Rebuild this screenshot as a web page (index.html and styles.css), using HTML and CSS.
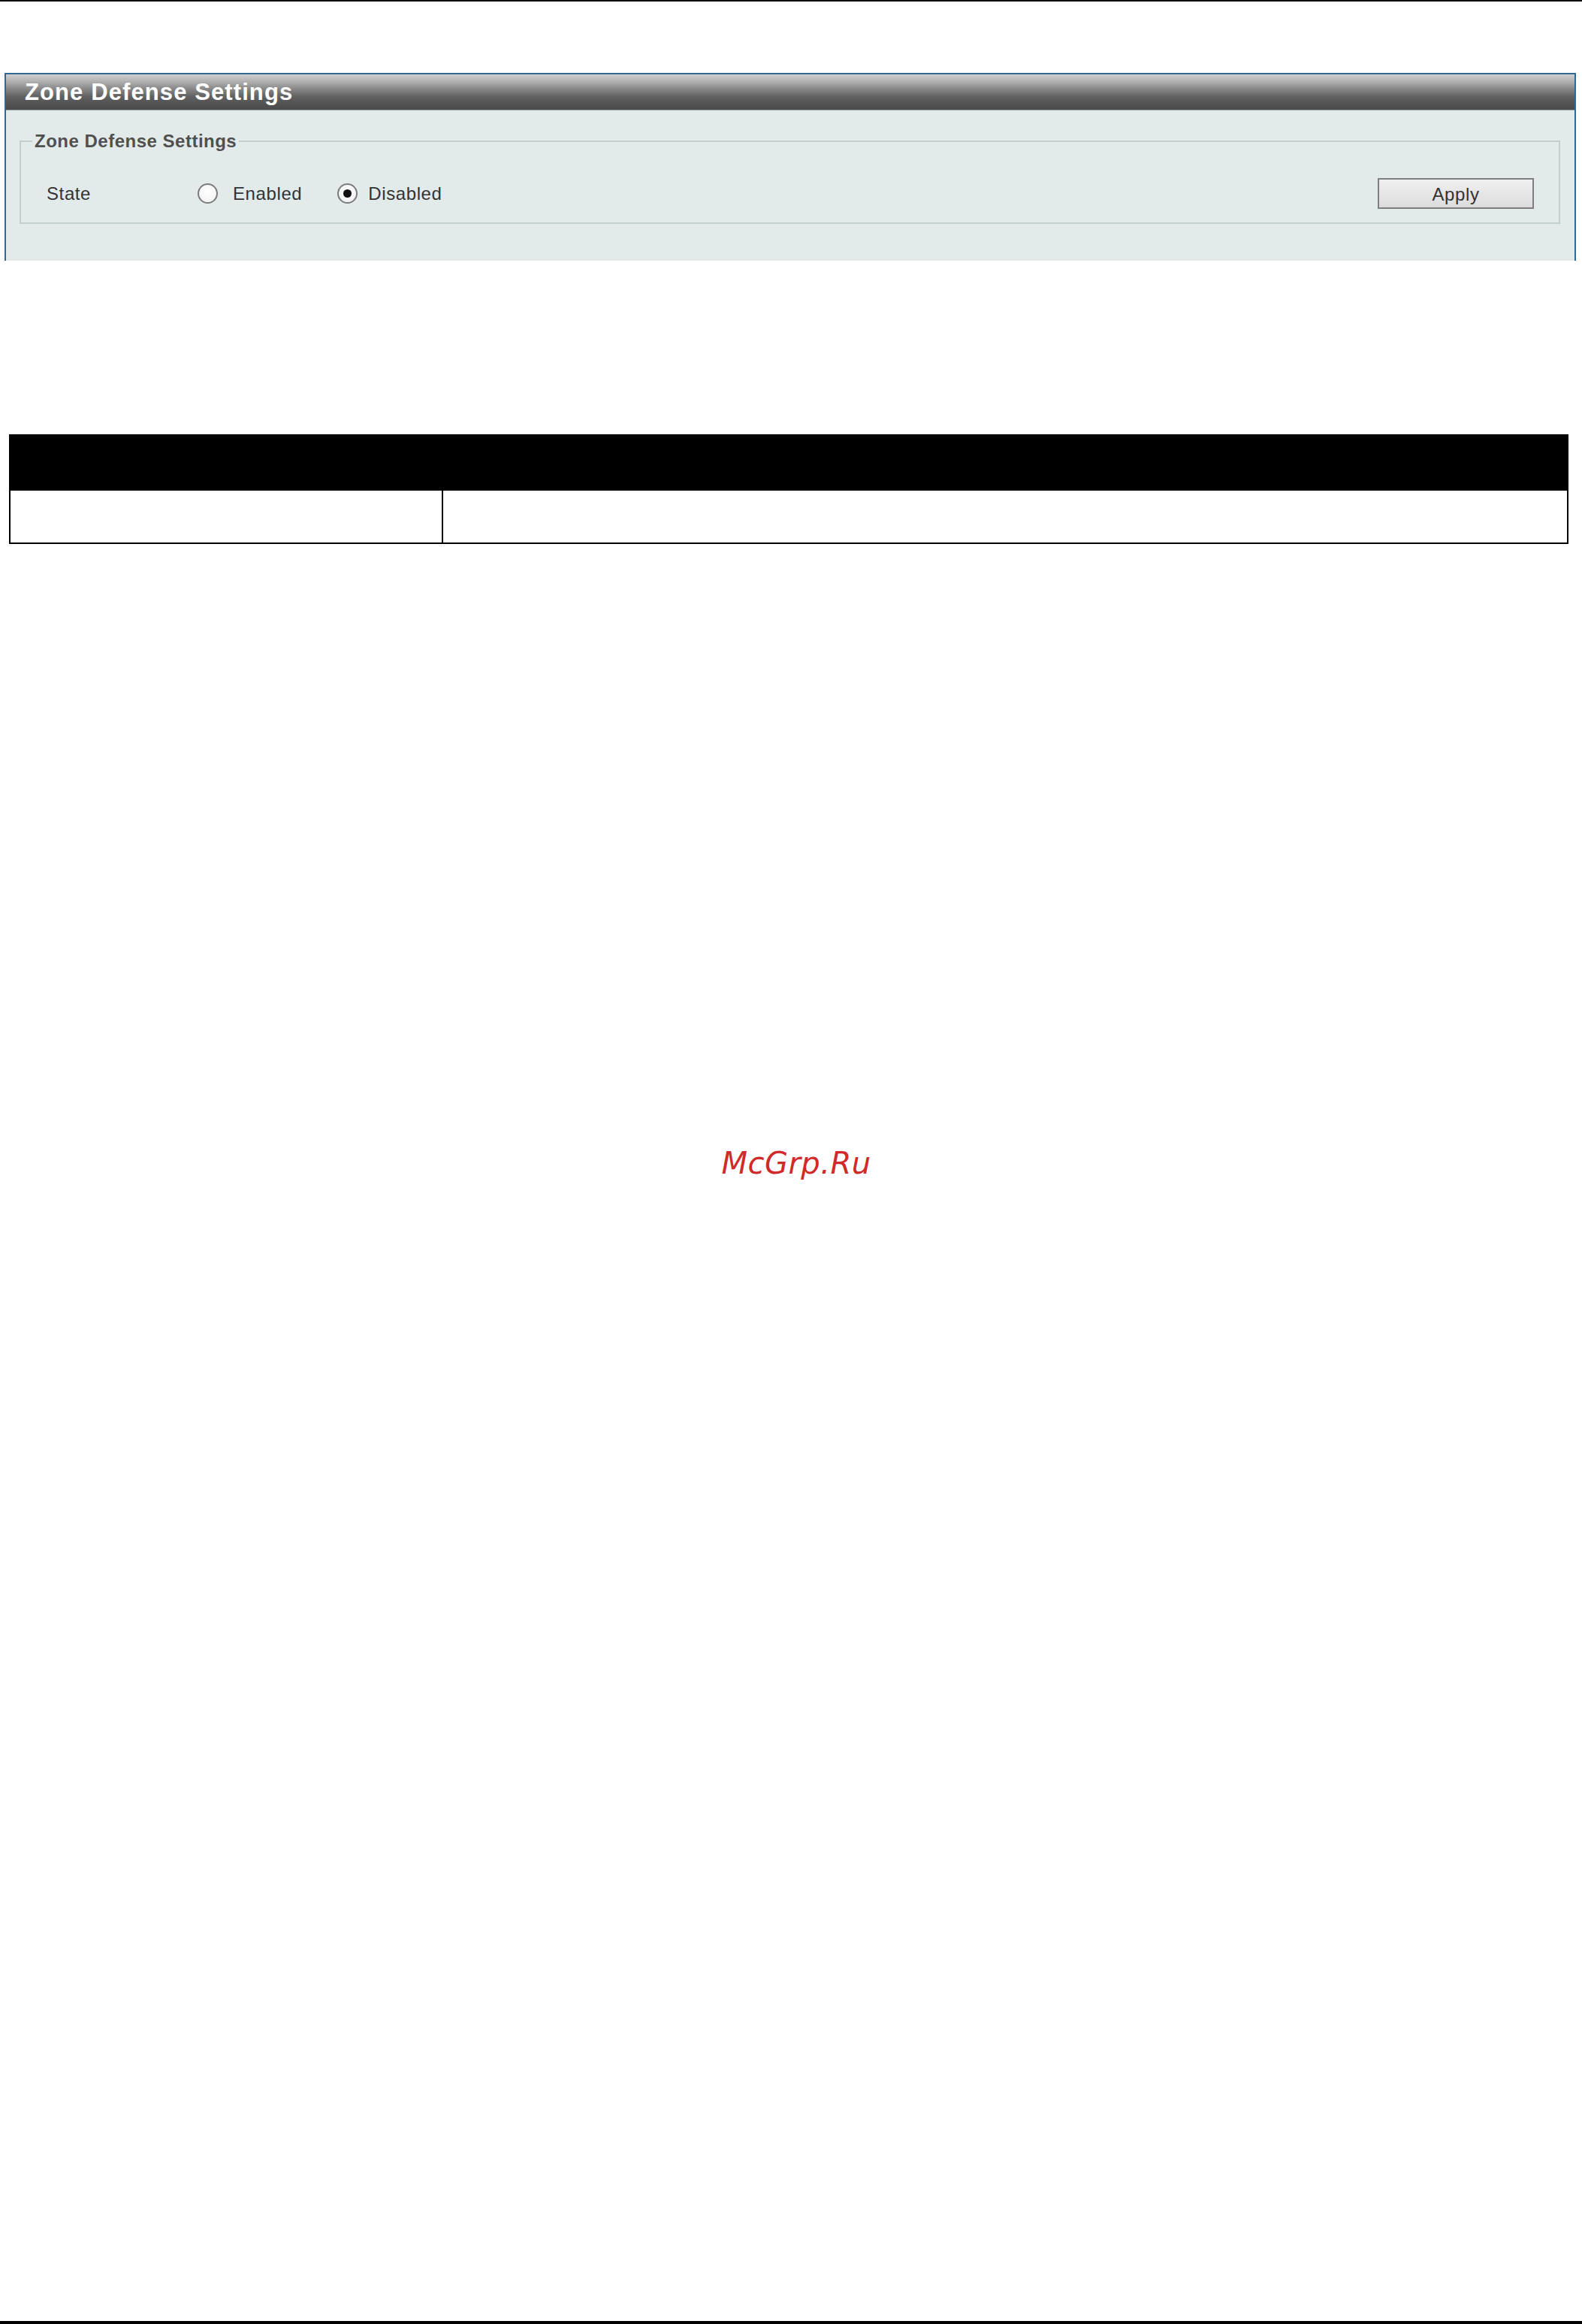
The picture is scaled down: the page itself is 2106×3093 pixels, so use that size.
FILE: index.html
```html
<!DOCTYPE html>
<html>
<head>
<meta charset="utf-8">
<title>Zone Defense Settings</title>
<link rel="stylesheet" href="styles.css">
</head>
<body>
<div class="topline"></div>
<main class="page">
  <section class="panel">
    <div class="panel-head">Zone Defense Settings</div>
    <div class="panel-body">
      <fieldset class="group">
        <legend class="group-title">Zone Defense Settings</legend>
        <div class="row">
          <span class="label">State</span>
          <label class="opt opt-en"><input type="radio" name="state" class="radio"><span class="opt-text">Enabled</span></label>
          <label class="opt opt-dis"><input type="radio" name="state" class="radio" checked><span class="opt-text">Disabled</span></label>
          <button class="btn" type="button">Apply</button>
        </div>
      </fieldset>
    </div>
  </section>

  <table class="info">
    <thead>
      <tr><th class="c1"></th><th class="c2"></th></tr>
    </thead>
    <tbody>
      <tr><td class="c1"></td><td class="c2"></td></tr>
    </tbody>
  </table>

  <div class="watermark">McGrp.Ru</div>
</main>
<div class="bottomline"></div>
</body>
</html>
```

FILE: styles.css
```css
html, body {
  margin: 0;
  padding: 0;
  background: #fff;
}
body {
  height: 3093px;
  display: flex;
  flex-direction: column;
  font-family: "Liberation Sans", Arial, sans-serif;
  color: #333;
}
.topline {
  height: 2px;
  background: #000;
  flex: none;
}
.page {
  flex: none;
}
.bottomline {
  margin-top: auto;
  height: 4px;
  background: #000;
  flex: none;
}

/* panel */
.panel {
  margin: 95px 0 0 6px;
  width: 2092px;
  box-sizing: border-box;
  border: 2px solid #2f6a97;
  border-bottom: none;
}
.panel-head {
  height: 47px;
  line-height: 47px;
  padding-left: 25px;
  background: linear-gradient(#d0d0d0 0%, #b4b4b4 18%, #8a8a8a 40%, #626262 62%, #545454 80%, #4b4b4b 100%);
  color: #fff;
  font-weight: bold;
  font-size: 31px;
  letter-spacing: 1.1px;
  border-bottom: 1px solid #9aa3a3;
}
.panel-body {
  background: #e2ebea;
  padding: 27px 19px 49px 18px;
}

/* fieldset */
.group {
  margin: 0;
  border: 2px solid #c3cfcf;
  padding: 35px 33px 18px 15px;
}
.group-title {
  padding: 0 3px;
  font-size: 24px;
  line-height: 28px;
  font-weight: bold;
  letter-spacing: 0.5px;
  color: #505050;
}
.row {
  display: flex;
  align-items: center;
  height: 41px;
  padding-left: 19px;
  font-size: 24px;
  letter-spacing: 0.6px;
}
.label {
  width: 201px;
}
.opt {
  display: flex;
  align-items: center;
}
.radio {
  appearance: none;
  -webkit-appearance: none;
  margin: 0;
  width: 27px;
  height: 27px;
  box-sizing: border-box;
  border: 2px solid #7c7c7c;
  border-radius: 50%;
  background: radial-gradient(circle at 50% 40%, #ffffff 0%, #f6f6f6 60%, #e4e4e4 100%);
  position: relative;
}
.radio:checked::after {
  content: "";
  position: absolute;
  left: 50%;
  top: 50%;
  width: 11px;
  height: 11px;
  margin: -5.5px 0 0 -5.5px;
  border-radius: 50%;
  background: #111;
}
.opt-en .opt-text {
  margin-left: 20px;
}
.opt-dis {
  margin-left: 47px;
}
.opt-dis .opt-text {
  margin-left: 14px;
}
.btn {
  margin-left: auto;
  width: 208px;
  height: 41px;
  box-sizing: border-box;
  border: 2px solid #7f7f7f;
  background: linear-gradient(#f0f0f0, #dcdcdc);
  font-family: "Liberation Sans", Arial, sans-serif;
  font-size: 24px;
  letter-spacing: 0.6px;
  color: #333;
  padding: 2px 0 0 0;
}

/* table */
.info {
  margin: 231px 0 0 12px;
  width: 2076px;
  border-collapse: separate;
  border-spacing: 0;
  table-layout: fixed;
}
.info th {
  height: 75px;
  padding: 0;
  background: #000;
}
.info th.c1, .info td.c1 {
  width: 578px;
}
.info td {
  height: 69px;
  padding: 0;
  border-bottom: 2px solid #000;
  box-sizing: content-box;
}
.info td.c1 {
  border-left: 2px solid #000;
  border-right: 2px solid #000;
  box-sizing: border-box;
}
.info td.c2 {
  border-right: 2px solid #000;
}

/* watermark */
.watermark {
  margin-top: 801px;
  padding-left: 14px;
  text-align: center;
  font-family: "DejaVu Sans", sans-serif;
  font-style: italic;
  font-size: 40px;
  line-height: 46px;
  color: #d02a2a;
  letter-spacing: 0.5px;
}
```
